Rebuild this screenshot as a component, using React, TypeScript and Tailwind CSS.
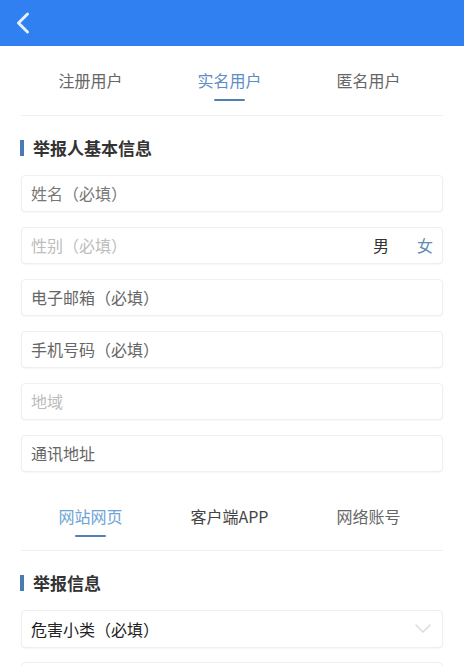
import React from 'react'

const FONT = { fontFamily: '"Noto Sans CJK SC", "Noto Sans", sans-serif' }

function Tabs({ items, active, activeColor, colors, className }: { items: string[]; active: number; activeColor: string; colors: string[]; className: string }) {
  return (
    <div className={`mx-[21px] border-b border-[#f0f0f0] ${className}`}>
      <div className="grid w-[417px] grid-cols-3">
        {items.map((t, i) => (
          <div key={t} className="flex flex-col items-center">
            <div className={`h-[24px] text-[16px] leading-[24px] ${i === active ? activeColor : colors[i]}`}>{t}</div>
            <div className={`mt-[7px] h-[2px] w-[31px] rounded-full ${i === active ? 'bg-[#4f80b6]' : 'bg-transparent'}`} />
          </div>
        ))}
      </div>
    </div>
  )
}

function SectionTitle({ children }: { children: React.ReactNode }) {
  return (
    <div className="mx-[20px] mt-[20px] flex h-[24px] items-center gap-[9px]">
      <div className="h-[16px] w-[4px] bg-[#4a7bb3]" />
      <div className="text-[17px] font-bold text-[#333]">{children}</div>
    </div>
  )
}

function Field({ label, tone, right }: { label: string; tone: string; right?: React.ReactNode }) {
  return (
    <div className="flex h-[37px] items-center rounded-[4px] border border-[#efefef] bg-white px-[9px] pb-[1px] shadow-[0_1px_2px_rgba(0,0,0,0.04)]">
      <span className={`flex-1 text-[16px] ${tone}`}>{label}</span>
      {right}
    </div>
  )
}

export default function App() {
  return (
    <div className="h-[666px] w-[464px] overflow-hidden bg-white" style={FONT}>
      {/* Header */}
      <div className="flex h-[46px] items-center bg-[#3080f1] pl-[15px]">
        <svg width="16" height="24" viewBox="0 0 16 24" fill="none">
          <path d="M12.5 3 L3.5 12 L12.5 21" stroke="#e6f1ff" strokeWidth="3" strokeLinecap="round" strokeLinejoin="round" />
        </svg>
      </div>

      {/* User type tabs */}
      <Tabs
        className="pt-[22px] pb-[14px]"
        items={['注册用户', '实名用户', '匿名用户']}
        active={1}
        activeColor="text-[#5d8dc2]"
        colors={['text-[#666]', '', 'text-[#666]']}
      />

      <SectionTitle>举报人基本信息</SectionTitle>

      <div className="mx-[21px] mt-[15px] flex flex-col gap-[15px]">
        <Field label="姓名（必填）" tone="text-[#777]" />
        <Field
          label="性别（必填）"
          tone="text-[#bdbdbd]"
          right={
            <div className="flex items-center gap-[28px] pr-[0px] text-[16px]">
              <span className="text-[#333]">男</span>
              <span className="text-[#5f8bb5]">女</span>
            </div>
          }
        />
        <Field label="电子邮箱（必填）" tone="text-[#666]" />
        <Field label="手机号码（必填）" tone="text-[#666]" />
        <Field label="地域" tone="text-[#bdbdbd]" />
        <Field label="通讯地址" tone="text-[#666]" />
      </div>

      {/* Target type tabs */}
      <Tabs
        className="mt-[32px] pb-[13px]"
        items={['网站网页', '客户端APP', '网络账号']}
        active={0}
        activeColor="text-[#6ea3d6]"
        colors={['', 'text-[#444]', 'text-[#666]']}
      />

      <SectionTitle>举报信息</SectionTitle>

      <div className="mx-[21px] mt-[15px] flex flex-col gap-[14px]">
        <div className="flex h-[38px] items-center rounded-[4px] border border-[#efefef] bg-white px-[9px] pb-[1px] shadow-[0_1px_2px_rgba(0,0,0,0.04)]">
          <span className="flex-1 text-[16px] text-[#222]">危害小类（必填）</span>
          <svg width="18" height="12" viewBox="0 0 18 12" fill="none" className="mr-[1px]">
            <path d="M2 2 L9 9 L16 2" stroke="#dcdcdc" strokeWidth="1.6" strokeLinecap="round" strokeLinejoin="round" />
          </svg>
        </div>
        <div className="h-[38px] rounded-[4px] border border-[#efefef] bg-white" />
      </div>
    </div>
  )
}
